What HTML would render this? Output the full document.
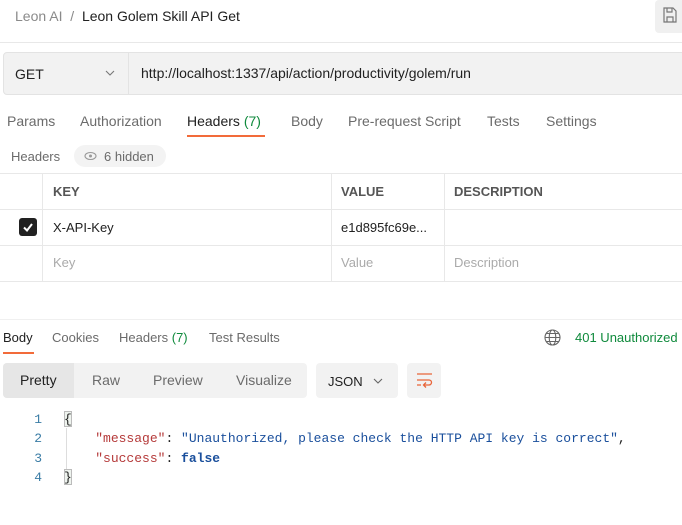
<!DOCTYPE html>
<html><head><style>
*{margin:0;padding:0;box-sizing:border-box}
body{width:682px;height:525px;overflow:hidden;background:#fff;font-family:"Liberation Sans",sans-serif;font-size:13px;color:#212121;position:relative}
.a{position:absolute;white-space:nowrap}
.g{color:#6b6b6b}
.l{position:absolute;background:#e8e8e8}
.m{font-family:"Liberation Mono",monospace;font-size:13px}
</style></head><body>
<div class="a" style="left:15px;top:8px;font-size:14px;color:#8a8a8a">Leon AI&nbsp; /&nbsp; <span style="color:#212121">Leon Golem Skill API Get</span></div>
<div class="a" style="left:655px;top:0;width:30px;height:33px;background:#f0f0f0;border-radius:4px"></div>
<svg class="a" style="left:663px;top:7px" width="14" height="16" viewBox="0 0 14 16"><path d="M1 1h9l3 3v11H1z M4 1v4h5V1 M4 15v-5h6v5" fill="none" stroke="#777" stroke-width="1.2"/></svg>
<div class="l" style="left:0;top:42px;width:682px;height:1px"></div>
<div class="a" style="left:3px;top:52px;width:690px;height:43px;background:#f2f2f2;border:1px solid #e3e3e3;border-radius:4px"></div>
<div class="l" style="left:128px;top:53px;width:1px;height:41px;background:#e3e3e3"></div>
<div class="a" style="left:15px;top:66px;font-size:14px">GET</div>
<svg class="a" style="left:105px;top:70px" width="10" height="6"><path d="M1 1l4 4 4-4" fill="none" stroke="#777" stroke-width="1.1"/></svg>
<div class="a" style="left:141px;top:65px;font-size:14px">http://localhost:1337/api/action/productivity/golem/run</div>
<div class="a g" style="left:7px;top:113px;font-size:14px">Params</div>
<div class="a g" style="left:80px;top:113px;font-size:14px">Authorization</div>
<div class="a" style="left:187px;top:113px;font-size:14px">Headers <span style="color:#0f8a3c">(7)</span></div>
<div class="a g" style="left:291px;top:113px;font-size:14px">Body</div>
<div class="a g" style="left:348px;top:113px;font-size:14px">Pre-request Script</div>
<div class="a g" style="left:487px;top:113px;font-size:14px">Tests</div>
<div class="a g" style="left:546px;top:113px;font-size:14px">Settings</div>
<div class="a" style="left:187px;top:135px;width:78px;height:2px;background:#f26b3a"></div>
<div class="a g" style="left:11px;top:149px">Headers</div>
<div class="a" style="left:74px;top:145px;width:92px;height:22px;background:#f3f3f3;border-radius:11px"></div>
<svg class="a" style="left:84px;top:151px" width="13" height="10"><ellipse cx="6.5" cy="5" rx="5.5" ry="3.5" fill="none" stroke="#999" stroke-width="1.1"/><circle cx="6.5" cy="5" r="1.5" fill="#999"/></svg>
<div class="a g" style="left:104px;top:149px">6 hidden</div>
<div class="l" style="left:0;top:173px;width:682px;height:1px"></div>
<div class="l" style="left:0;top:209px;width:682px;height:1px"></div>
<div class="l" style="left:0;top:245px;width:682px;height:1px"></div>
<div class="l" style="left:0;top:281px;width:682px;height:1px"></div>
<div class="l" style="left:42px;top:173px;width:1px;height:108px"></div>
<div class="l" style="left:331px;top:173px;width:1px;height:108px"></div>
<div class="l" style="left:444px;top:173px;width:1px;height:108px"></div>
<div class="a g" style="left:53px;top:184px;font-weight:bold;color:#555">KEY</div>
<div class="a g" style="left:341px;top:184px;font-weight:bold;color:#555">VALUE</div>
<div class="a g" style="left:454px;top:184px;font-weight:bold;color:#555">DESCRIPTION</div>
<div class="a" style="left:19px;top:218px;width:18px;height:18px;background:#212121;border-radius:3px"></div>
<svg class="a" style="left:21px;top:220px" width="14" height="14"><path d="M3 7.5l3 3 5-6.5" fill="none" stroke="#fff" stroke-width="2"/></svg>
<div class="a" style="left:53px;top:220px">X-API-Key</div>
<div class="a" style="left:341px;top:220px">e1d895fc69e...</div>
<div class="a" style="left:53px;top:255px;color:#aaa">Key</div>
<div class="a" style="left:341px;top:255px;color:#aaa">Value</div>
<div class="a" style="left:454px;top:255px;color:#aaa">Description</div>
<div class="l" style="left:0;top:319px;width:682px;height:1px;background:#f0f0f0"></div>
<div class="a" style="left:3px;top:330px">Body</div>
<div class="a g" style="left:52px;top:330px">Cookies</div>
<div class="a g" style="left:119px;top:330px">Headers <span style="color:#0f8a3c">(7)</span></div>
<div class="a g" style="left:209px;top:330px">Test Results</div>
<div class="a" style="left:3px;top:352px;width:31px;height:2px;background:#f26b3a"></div>
<svg class="a" style="left:544px;top:329px" width="17" height="17" viewBox="0 0 17 17"><g fill="none" stroke="#666" stroke-width="1.1"><circle cx="8.5" cy="8.5" r="7.5"/><ellipse cx="8.5" cy="8.5" rx="3.3" ry="7.5"/><path d="M1 8.5h15M2.5 4.5h12M2.5 12.5h12"/></g></svg>
<div class="a" style="left:575px;top:330px;color:#0f8a3c">401 Unauthorized</div>
<div class="a" style="left:3px;top:363px;width:304px;height:35px;background:#f2f2f2;border-radius:4px"></div>
<div class="a" style="left:3px;top:363px;width:71px;height:35px;background:#e6e6e6;border-radius:4px 0 0 4px"></div>
<div class="a" style="left:20px;top:372px;font-size:14px">Pretty</div>
<div class="a g" style="left:92px;top:372px;font-size:14px">Raw</div>
<div class="a g" style="left:153px;top:372px;font-size:14px">Preview</div>
<div class="a g" style="left:236px;top:372px;font-size:14px">Visualize</div>
<div class="a" style="left:316px;top:363px;width:82px;height:35px;background:#f2f2f2;border-radius:4px"></div>
<div class="a" style="left:328px;top:374px;font-size:13px">JSON</div>
<svg class="a" style="left:373px;top:378px" width="10" height="6"><path d="M1 1l4 4 4-4" fill="none" stroke="#666" stroke-width="1.1"/></svg>
<div class="a" style="left:407px;top:363px;width:34px;height:35px;background:#f2f2f2;border-radius:4px"></div>
<svg class="a" style="left:416px;top:372px" width="17" height="16"><path d="M1 2h15M1 8h12a2.5 2.5 0 0 1 0 5H8M10 10.5l-2.5 2.5 2.5 2.5M1 13h4" fill="none" stroke="#e8653a" stroke-width="1.3"/></svg>
<div class="a m" style="left:34px;top:410px;color:#3a7ca5;line-height:19.3px;text-align:right;width:8px">1<br>2<br>3<br>4</div>
<div class="a" style="left:64px;top:411px;width:8px;height:16px;border:1px solid #bbb;background:#eef3ee"></div>
<div class="a" style="left:64px;top:469px;width:8px;height:16px;border:1px solid #bbb;background:#eef3ee"></div>
<div class="a" style="left:66px;top:428px;width:1px;height:41px;background:#ddd"></div>
<div class="a m" style="left:64px;top:410px;line-height:19.3px">{<br>&nbsp;&nbsp;&nbsp;&nbsp;<span style="color:#b53a3a">"message"</span>: <span style="color:#1a4f9c">"Unauthorized, please check the HTTP API key is correct"</span>,<br>&nbsp;&nbsp;&nbsp;&nbsp;<span style="color:#b53a3a">"success"</span>: <b style="color:#1a4f9c">false</b><br>}</div>
</body></html>
